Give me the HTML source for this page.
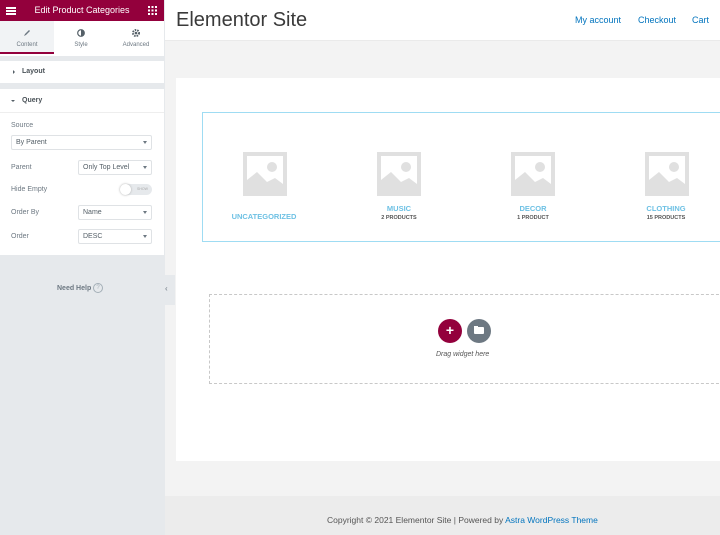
<!DOCTYPE html>
<html><head><style>
*{margin:0;padding:0;box-sizing:border-box}
body{width:720px;height:535px;overflow:hidden;position:relative;font-family:"Liberation Sans",sans-serif;background:#f3f3f3}
.a{position:absolute}
.lbl{font-size:7px;color:#6d7882}
.sel{position:absolute;height:15px;border:1px solid #dfe2e5;border-radius:2px;font-size:7px;color:#556068;padding:3px 4px;background:#fff}
.sel:after{content:"";position:absolute;right:4px;top:5px;border-left:2.5px solid transparent;border-right:2.5px solid transparent;border-top:3px solid #6d7882}
.ph{position:absolute;width:44px;height:44px}
.cat{position:absolute;width:100px;text-align:center;font-size:7.5px;font-weight:bold;color:#6ec1e4}
.cnt{display:block;font-size:5.5px;color:#555;font-weight:bold;margin-top:2px}
</style></head><body>
<svg width="0" height="0" style="position:absolute"><defs><g id="ph"><rect x="0" y="0" width="44" height="44" fill="#e0e0e0"/><rect x="4" y="4" width="36" height="36" fill="#fff"/><path d="M4 28 L14 20 L24 30 L32 26 L40 32 L40 40 L4 40 Z" fill="#e0e0e0"/><circle cx="29" cy="15" r="5" fill="#e0e0e0"/></g></defs></svg>
<!-- sidebar -->
<div class="a" style="left:0;top:0;width:165px;height:535px;background:#e6e9ec"></div>
<div class="a" style="left:0;top:0;width:164px;height:255px;background:#fff"></div>
<div class="a" style="left:0;top:0;width:164px;height:21px;background:#93003c"></div>
<div class="a" style="left:6px;top:7px;width:10px;height:1.5px;background:#fff;box-shadow:0 3px 0 #fff,0 6px 0 #fff"></div>
<div class="a" style="left:0;top:5px;width:164px;text-align:center;color:#fff;font-size:9px">Edit Product Categories</div>
<svg class="a" style="left:148px;top:6px" width="9" height="9"><g fill="#fff"><rect x="0" y="0" width="2" height="2"/><rect x="3.5" y="0" width="2" height="2"/><rect x="7" y="0" width="2" height="2"/><rect x="0" y="3.5" width="2" height="2"/><rect x="3.5" y="3.5" width="2" height="2"/><rect x="7" y="3.5" width="2" height="2"/><rect x="0" y="7" width="2" height="2"/><rect x="3.5" y="7" width="2" height="2"/><rect x="7" y="7" width="2" height="2"/></g></svg>
<div class="a" style="left:0;top:21px;width:54px;height:33px;background:#f1f3f5;border-bottom:2px solid #93003c"></div>
<svg class="a" style="left:23px;top:29px" width="8" height="8"><path d="M1 7 L2 5 L6 1 L7 2 L3 6 Z" fill="#6d7882"/></svg>
<svg class="a" style="left:77px;top:29px" width="8" height="8"><circle cx="4" cy="4" r="3.3" fill="none" stroke="#556068" stroke-width="1.2"/><path d="M4 0.7 A3.3 3.3 0 0 1 4 7.3Z" fill="#556068"/></svg>
<svg class="a" style="left:132px;top:29px" width="8" height="8"><circle cx="4" cy="4" r="3" fill="none" stroke="#556068" stroke-width="2" stroke-dasharray="1.5 1"/><circle cx="4" cy="4" r="1.3" fill="#556068"/></svg>
<div class="a lbl" style="left:0;top:42px;width:54px;text-align:center;font-size:6px">Content</div>
<div class="a lbl" style="left:54px;top:42px;width:54px;text-align:center;font-size:6px">Style</div>
<div class="a lbl" style="left:108px;top:42px;width:56px;text-align:center;font-size:6px">Advanced</div>
<div class="a" style="left:0;top:56px;width:164px;height:5px;background:#e6e9ec"></div>
<div class="a" style="left:0;top:83px;width:164px;height:6px;background:#e6e9ec"></div>
<div class="a" style="left:13px;top:70px;border-top:2px solid transparent;border-bottom:2px solid transparent;border-left:2.5px solid #556068"></div>
<div class="a" style="left:22px;top:68px;font-size:7px;font-weight:bold;color:#495157">Layout</div>
<div class="a" style="left:11px;top:100px;border-left:2px solid transparent;border-right:2px solid transparent;border-top:2.5px solid #556068"></div>
<div class="a" style="left:22px;top:97px;font-size:7px;font-weight:bold;color:#495157">Query</div>
<div class="a" style="left:0;top:112px;width:164px;height:1px;background:#eee"></div>
<div class="a lbl" style="left:11px;top:122px">Source</div>
<div class="sel" style="left:11px;top:135px;width:141px">By Parent</div>
<div class="a lbl" style="left:11px;top:164px">Parent</div>
<div class="sel" style="left:78px;top:160px;width:74px">Only Top Level</div>
<div class="a lbl" style="left:11px;top:186px">Hide Empty</div>
<div class="a" style="left:120px;top:184px;width:32px;height:11px;border-radius:6px;background:#e6e9ec"></div>
<div class="a" style="left:120px;top:184px;width:11px;height:11px;border-radius:6px;background:#fff;box-shadow:0 0 2px #aaa"></div>
<div class="a" style="left:137px;top:187px;font-size:3.5px;color:#aaa">SHOW</div>
<div class="a lbl" style="left:11px;top:209px">Order By</div>
<div class="sel" style="left:78px;top:205px;width:74px">Name</div>
<div class="a lbl" style="left:11px;top:233px">Order</div>
<div class="sel" style="left:78px;top:229px;width:74px">DESC</div>
<div class="a" style="left:57px;top:285px;font-size:7px;font-weight:bold;color:#6d7882">Need Help</div>
<div class="a" style="left:93px;top:283px;width:10px;height:10px;border:1px solid #a4afb7;border-radius:50%;font-size:6px;color:#a4afb7;text-align:center;line-height:8px">?</div>
<div class="a" style="left:160px;top:275px;width:15px;height:30px;background:#e6e9ec"></div>
<div class="a" style="left:165px;top:284px;font-size:8px;color:#6d7882">‹</div>
<!-- preview -->
<div class="a" style="left:165px;top:0;width:555px;height:41px;background:#fff;border-bottom:1px solid #eaeaea"></div>
<div class="a" style="left:176px;top:9px;font-size:20px;color:#3a3a3a;font-family:'Liberation Sans',sans-serif">Elementor Site</div>
<div class="a" style="left:575px;top:15px;font-size:9px;color:#0274be">My account</div>
<div class="a" style="left:638px;top:15px;font-size:9px;color:#0274be">Checkout</div>
<div class="a" style="left:692px;top:15px;font-size:9px;color:#0274be">Cart</div>
<div class="a" style="left:176px;top:78px;width:544px;height:383px;background:#fff"></div>
<div class="a" style="left:202px;top:112px;width:530px;height:130px;border:1px solid #9fdcf3"></div>
<svg class="ph" style="left:243px;top:152px"><use href="#ph"/></svg>
<svg class="ph" style="left:377px;top:152px"><use href="#ph"/></svg>
<svg class="ph" style="left:511px;top:152px"><use href="#ph"/></svg>
<svg class="ph" style="left:645px;top:152px"><use href="#ph"/></svg>
<div class="cat" style="left:214px;top:212px">UNCATEGORIZED</div>
<div class="cat" style="left:349px;top:204px">MUSIC<span class="cnt">2 PRODUCTS</span></div>
<div class="cat" style="left:483px;top:204px">DECOR<span class="cnt">1 PRODUCT</span></div>
<div class="cat" style="left:616px;top:204px">CLOTHING<span class="cnt">15 PRODUCTS</span></div>
<div class="a" style="left:209px;top:294px;width:520px;height:90px;border:1px dashed #c8c8c8"></div>
<div class="a" style="left:438px;top:319px;width:24px;height:24px;border-radius:50%;background:#93003c;color:#fff;text-align:center;font-size:14px;line-height:23px;font-weight:bold">+</div>
<div class="a" style="left:467px;top:319px;width:24px;height:24px;border-radius:50%;background:#6d7882"></div>
<div class="a" style="left:474px;top:327px;width:10px;height:7px;background:#fff;border-radius:1px"></div>
<div class="a" style="left:474px;top:325.5px;width:4px;height:2px;background:#fff"></div>
<div class="a" style="left:436px;top:351px;font-size:7px;font-style:italic;color:#555">Drag widget here</div>
<div class="a" style="left:165px;top:496px;width:555px;height:39px;background:#ececec"></div>
<div class="a" style="left:327px;top:515px;font-size:8.5px;color:#555">Copyright © 2021 Elementor Site | Powered by <span style="color:#0274be">Astra WordPress Theme</span></div>
</body></html>
